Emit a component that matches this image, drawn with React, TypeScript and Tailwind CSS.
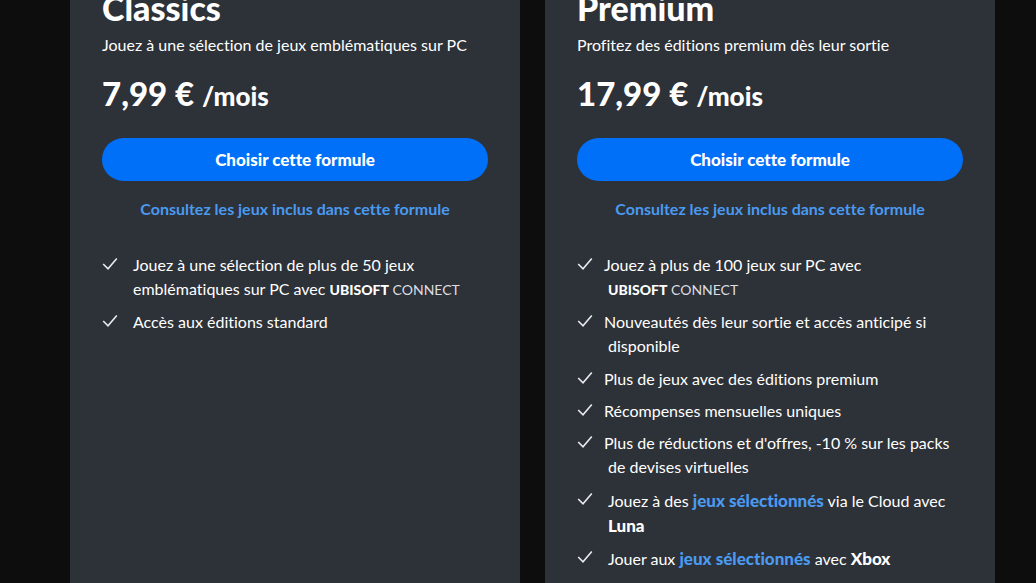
import type { ReactNode } from 'react';

type Feature = { key: string; content: ReactNode; className?: string };

type PlanProps = {
  name: string;
  tagline: string;
  price: string;
  features: Feature[];
};

function Check() {
  return (
    <svg
      viewBox="0 0 16 14"
      className="mt-1 h-3.5 w-4 shrink-0"
      fill="none"
      stroke="#e9ebee"
      strokeWidth="1.6"
      aria-hidden="true"
    >
      <path d="M1.2 7 L6 11.8 L14.8 1.6" />
    </svg>
  );
}

function UbisoftConnect() {
  return (
    <span className="text-[14px] leading-none whitespace-nowrap">
      <span className="font-black">UBISOFT</span> <span className="text-[#dcdee1]">CONNECT</span>
    </span>
  );
}

function SelectedGames() {
  return (
    <a href="#jeux" className="text-[17px] leading-none font-black text-[#4a9af0]">
      jeux sélectionnés
    </a>
  );
}

function Brand({ children }: { children: string }) {
  return <strong className="text-[17px] leading-none font-black">{children}</strong>;
}

function Plan({ name, tagline, price, features }: PlanProps) {
  return (
    <section className="bg-[#2d3138] px-8 pb-3">
      <h2 className="text-[34px] leading-4 font-black">{name}</h2>
      <p className="mt-[17px] text-[16px] leading-6">{tagline}</p>
      <p className="mt-4 text-[33px] leading-10 font-black">
        {price} <span className="text-[26px]">/mois</span>
      </p>
      <button
        type="button"
        className="mt-[22px] h-[43px] w-full cursor-pointer rounded-full bg-[#0070f8] text-[17px] font-black"
      >
        Choisir cette formule
      </button>
      <p className="mt-4 text-center leading-6">
        <a href="#jeux" className="text-[16px] font-bold text-[#4a9af0]">
          Consultez les jeux inclus dans cette formule
        </a>
      </p>
      <ul className="mt-8 flex flex-col gap-2 text-[16px] leading-6">
        {features.map((f) => (
          <li key={f.key} className="flex gap-[15px]">
            <Check />
            <div className={f.className}>{f.content}</div>
          </li>
        ))}
      </ul>
    </section>
  );
}

const classics: Feature[] = [
  {
    key: 'library',
    className: 'pb-px',
    content: (
      <>
        Jouez à une sélection de plus de 50 jeux
        <br />
        emblématiques sur PC avec <UbisoftConnect />
      </>
    ),
  },
  { key: 'standard', content: 'Accès aux éditions standard' },
];

const premium: Feature[] = [
  {
    key: 'library',
    className: '-indent-1 pb-px',
    content: (
      <>
        Jouez à plus de 100 jeux sur PC avec
        <br />
        <UbisoftConnect />
      </>
    ),
  },
  {
    key: 'new',
    className: '-indent-1 pb-px',
    content: (
      <>
        Nouveautés dès leur sortie et accès anticipé si
        <br />
        disponible
      </>
    ),
  },
  { key: 'editions', className: '-indent-1', content: 'Plus de jeux avec des éditions premium' },
  { key: 'rewards', className: '-indent-1', content: 'Récompenses mensuelles uniques' },
  {
    key: 'discounts',
    className: '-indent-1 pb-px',
    content: (
      <>
        Plus de réductions et d'offres, -10 % sur les packs
        <br />
        de devises virtuelles
      </>
    ),
  },
  {
    key: 'luna',
    className: 'leading-[25px]',
    content: (
      <>
        Jouez à des <SelectedGames /> via le Cloud avec
        <br />
        <Brand>Luna</Brand>
      </>
    ),
  },
  {
    key: 'xbox',
    className: 'leading-[25px]',
    content: (
      <>
        Jouer aux <SelectedGames /> avec <Brand>Xbox</Brand>
      </>
    ),
  },
];

export default function App() {
  return (
    <main className="grid min-h-screen grid-cols-2 gap-[25px] overflow-hidden bg-[#0d0d0d] pr-[41px] pl-[70px] font-['Lato',sans-serif] text-white [font-variant-ligatures:none]">
      <Plan
        name="Classics"
        tagline="Jouez à une sélection de jeux emblématiques sur PC"
        price="7,99 €"
        features={classics}
      />
      <Plan
        name="Premium"
        tagline="Profitez des éditions premium dès leur sortie"
        price="17,99 €"
        features={premium}
      />
    </main>
  );
}
